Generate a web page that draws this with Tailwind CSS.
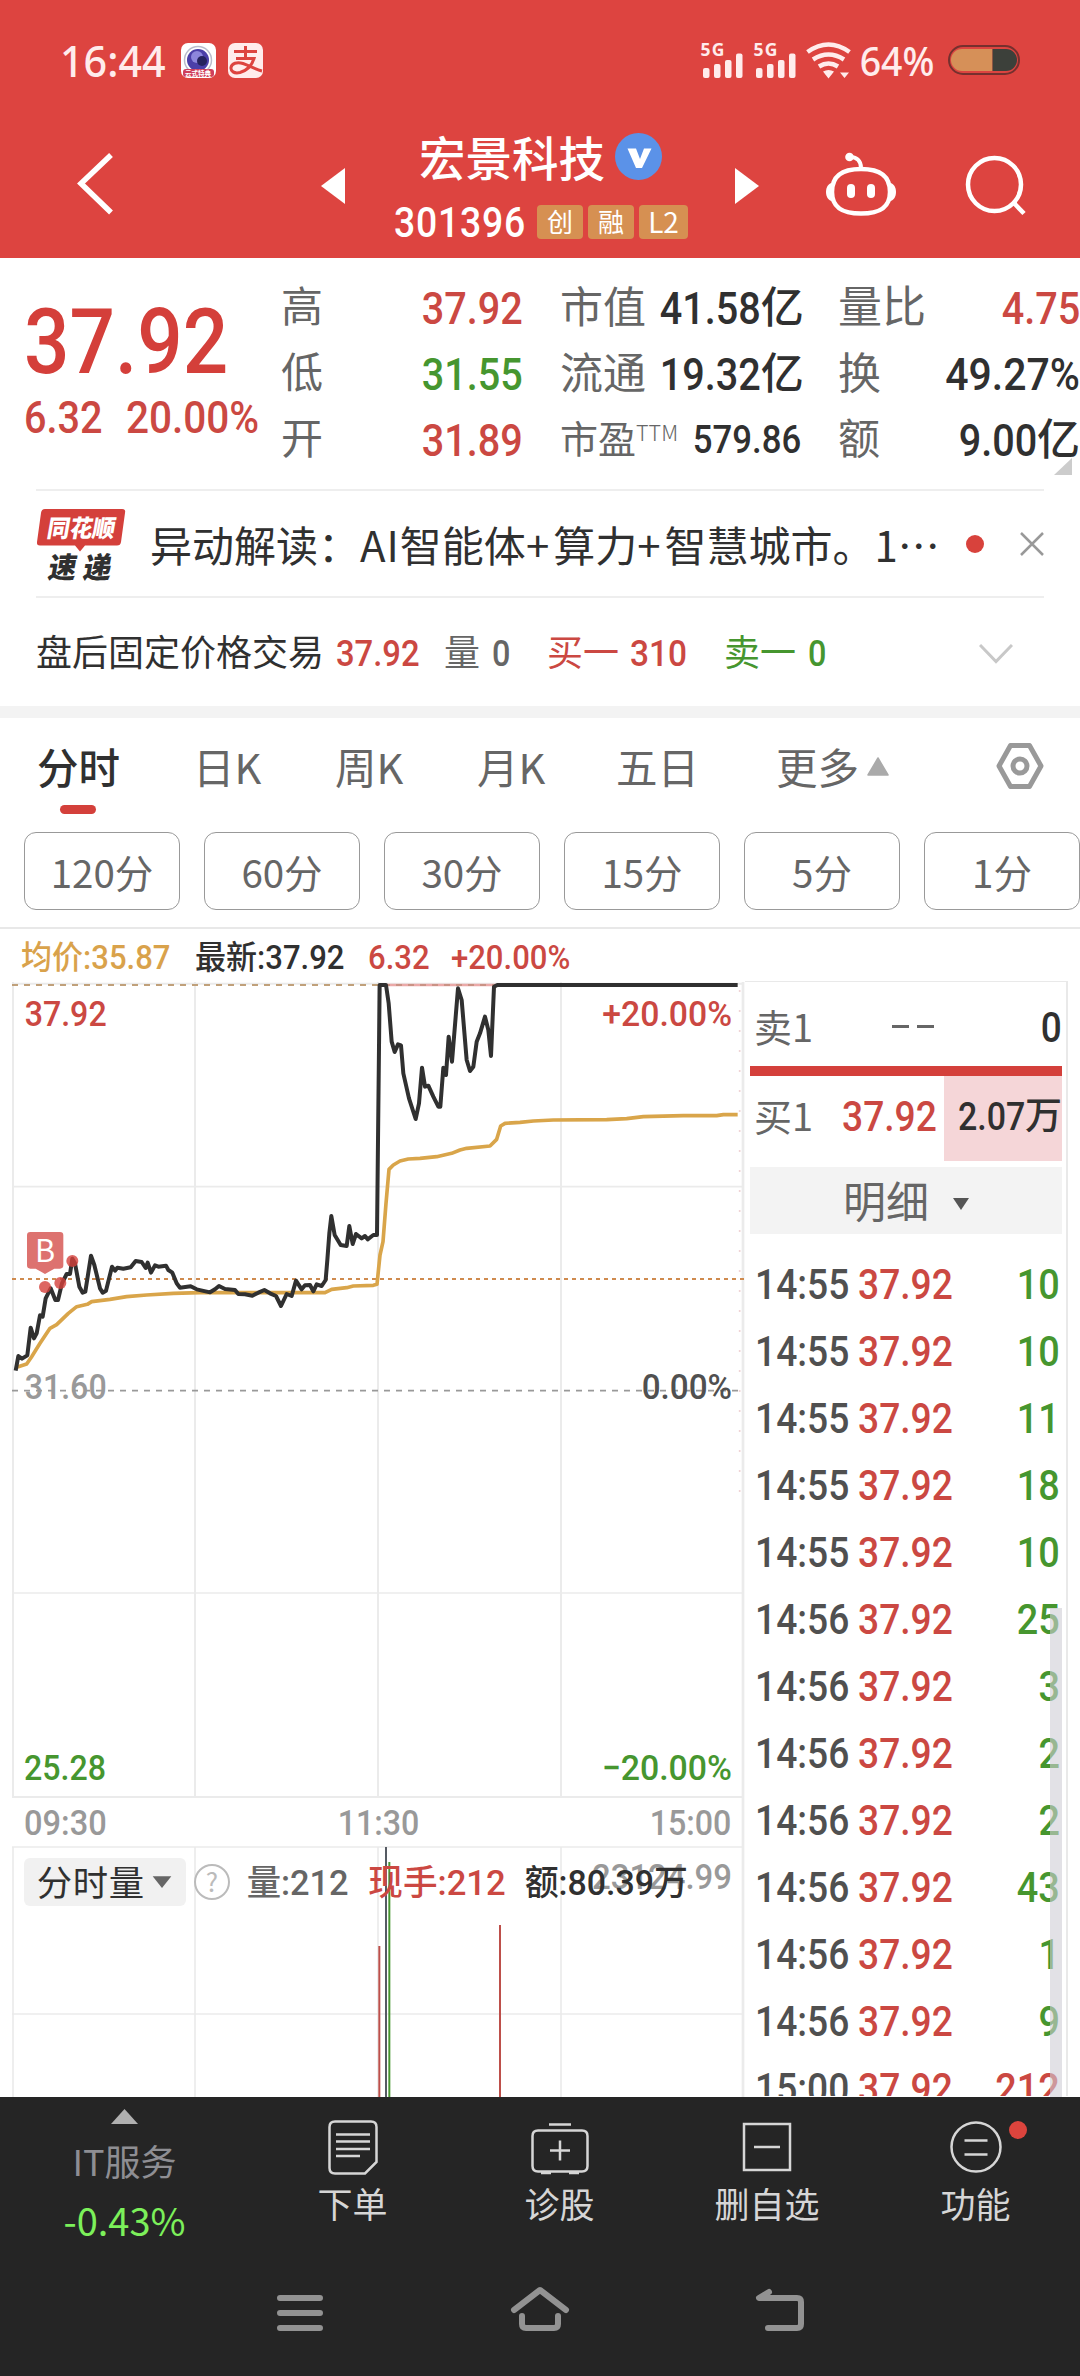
<!DOCTYPE html>
<html lang="zh-CN">
<head>
<meta charset="utf-8">
<title>宏景科技 301396</title>
<script src="https://cdn.jsdelivr.net/npm/@tailwindcss/browser@4"></script>
</head>
<body class="w-[1080px] h-[2376px] overflow-hidden bg-white font-['Noto_Sans_CJK_SC',sans-serif] text-[#303030] leading-none whitespace-nowrap flex flex-col">

<!-- Header -->
<header class="h-[258px] shrink-0 bg-[#dd4440] text-white flex flex-col">
  <!-- Status bar -->
  <div class="h-[120px] pl-[60px] pr-[60px] flex items-center justify-between text-[#ffecec]">
    <div class="flex items-center">
      <span class="w-[121px] font-['Noto_Sans'] font-medium text-[43px] origin-left scale-x-[.96]">16:44</span>
      <svg class="w-[35px] h-[35px]" viewBox="0 0 35 35"><rect width="35" height="35" rx="7" fill="#fff"/><circle cx="17" cy="17" r="13.500" fill="none" stroke="#b9bccb" stroke-width="1.500"/><circle cx="17" cy="17" r="11" fill="#4b3fa8"/><circle cx="16" cy="14" r="6" fill="#8d86dc"/><circle cx="21" cy="18" r="5" fill="#26235e"/><rect x="2" y="26" width="31" height="8" rx="3" fill="#cf3f5c"/><text x="17" y="32.500" font-size="6.500" font-weight="700" fill="#fff" text-anchor="middle">云式特典</text></svg>
      <svg class="w-[35px] h-[35px] ml-3" viewBox="0 0 35 35"><rect width="35" height="35" rx="7" fill="#ffecec"/><g fill="none" stroke="#dd4440" stroke-width="3"><path d="M6 8.500H29M17.500 3V15.500M8 15.500H26C24 22 19 27.500 12 29.500C6 31 2.500 28 3 24.500C3.500 20.500 9 18.500 15 20.500C22 23 28 26.500 34 28"/></g></svg>
    </div>
    <div class="flex items-center">
      <svg class="w-[152px] h-[37px] overflow-visible" viewBox="700 42 152 37" fill="#ffecec">
        <text x="700.500" y="56" font-size="17.500" font-weight="700" font-family="Noto Sans" textLength="24">5G</text>
        <text x="753.500" y="56" font-size="17.500" font-weight="700" font-family="Noto Sans" textLength="24">5G</text>
        <rect x="703" y="68" width="6.500" height="10" rx="2"/><rect x="714" y="64" width="6.500" height="14" rx="2"/><rect x="725" y="60" width="6.500" height="18" rx="2"/><rect x="736" y="53.500" width="6.500" height="24.500" rx="2"/>
        <rect x="756" y="68" width="6.500" height="10" rx="2"/><rect x="767" y="64" width="6.500" height="14" rx="2"/><rect x="778" y="60" width="6.500" height="18" rx="2"/><rect x="789" y="53.500" width="6.500" height="24.500" rx="2"/>
        <g fill="none" stroke="#ffecec" stroke-width="4.500"><path d="M807.500 52Q828.500 37 849.500 52"/><path d="M813 59.500Q828.500 49.500 844 59.500"/><path d="M819 66.500Q828.500 60.500 838 66.500"/></g>
        <path d="M823 71.500Q828.500 68.500 834 71.500L828.500 78.500ZM840 72.500H849L844.500 78Z"/>
      </svg>
      <span class="w-[96px] pl-2 font-['Noto_Sans'] font-medium text-[39px] origin-left scale-x-[.96]">64%</span>
      <svg class="w-[72px] h-[30px]" viewBox="0 0 72 30"><rect x="1" y="1" width="70" height="28" rx="14" fill="none" stroke="#75302e" stroke-width="2"/><path d="M14 4H44.500V26H14A11 11 0 0 1 14 4Z" fill="#d69058"/><path d="M44.500 4H58A11 11 0 0 1 58 26H44.500Z" fill="#3c403a"/></svg>
    </div>
  </div>
  <!-- Title bar -->
  <div class="flex h-[138px]">
    <svg class="w-[394px] h-[138px]" viewBox="0 120 394 138"><path d="M111 155L81 183.500L111 212.500" fill="none" stroke="#fff" stroke-width="5.500"/><path d="M345 168V204L321 186Z" fill="#fff"/></svg>
    <div class="w-[296px] flex flex-col">
      <div class="h-[76px] pl-[25px] pt-[13px] flex items-start">
        <span class="w-[196px] font-medium text-[46.5px] leading-[46px]">宏景科技</span>
        <svg class="w-[47px] h-[47px]" viewBox="0 0 47 47"><circle cx="23.500" cy="23.500" r="23.500" fill="#5b92e8"/><path d="M12.500 15.500H21L25 26L29 15.500H36.500L27 35H21Z" fill="#fff"/></svg>
      </div>
      <div class="h-[52px] flex items-center text-[26px] leading-[32px]">
        <span class="w-[143px] pt-0.5 font-[Roboto] font-medium text-[42px] tracking-[0.02em] origin-left scale-x-[.89]">301396</span>
        <span class="w-[46px] h-[34px] mr-[5px] rounded-[4px] bg-[#d69052] text-center">创</span>
        <span class="w-[46px] h-[34px] mr-[5px] rounded-[4px] bg-[#d69052] text-center">融</span>
        <span class="w-[49px] h-[34px] rounded-[4px] bg-[#d69052] text-center text-[28px]">L2</span>
      </div>
    </div>
    <svg class="w-[390px] h-[138px]" viewBox="690 120 390 138"><path d="M735 168V204L759 186Z" fill="#fff"/><g fill="none" stroke="#fff" stroke-width="4.500"><path d="M861 169C879 169 890 175 890 192C890 208 879 213.500 861 213.500C843 213.500 832 208 832 192C832 175 843 169 861 169Z"/><path d="M861 168C861 160 856 157 850 157" stroke-width="4"/><circle cx="994.500" cy="184.500" r="26.500"/><path d="M1013 202L1024 213.500"/></g><g fill="#fff"><circle cx="849.500" cy="157" r="4.300"/><rect x="847" y="184" width="8" height="14" rx="4"/><rect x="867" y="184" width="8" height="14" rx="4"/><path d="M832 183C824 184 824 200 832 201ZM890 183C898 184 898 200 890 201Z"/></g></svg>
  </div>
</header>

<!-- Quote summary -->
<section class="relative h-[231px] shrink-0 flex font-[Roboto,'Noto_Sans_CJK_SC'] font-medium text-[45px]">
  <div class="w-[281px] pt-[39px] text-[#d43f3a]">
    <div class="pl-[24px] h-[91px] leading-[92px] text-[90px]"><span class="inline-block origin-left scale-x-[.89]">37.92</span></div>
    <div class="flex h-[60px] leading-[60px] pl-[24px] text-[#cb4842]"><span class="w-[102px] origin-left scale-x-[.88]">6.32</span><span class="origin-left scale-x-[.9]">20.00%</span></div>
  </div>
  <div class="w-[242px] pt-[17px] text-[#cb4842]">
    <div class="h-[66px] flex items-center justify-between"><span class="font-normal text-[42px] text-[#666]">高</span><span class="origin-right scale-x-[.88]">37.92</span></div>
    <div class="h-[66px] flex items-center justify-between"><span class="font-normal text-[42px] text-[#666]">低</span><span class="origin-right scale-x-[.88] text-[#46962f]">31.55</span></div>
    <div class="h-[66px] flex items-center justify-between"><span class="font-normal text-[42px] text-[#666]">开</span><span class="origin-right scale-x-[.88]">31.89</span></div>
  </div>
  <div class="w-[278px] pl-[37px] pt-[17px]">
    <div class="h-[66px] flex items-center justify-between"><span class="font-normal text-[43px] text-[#666]">市值</span><span class="flex items-center"><span class="origin-right scale-x-[.88]">41.58</span><span class="text-[43px]">亿</span></span></div>
    <div class="h-[66px] flex items-center justify-between"><span class="font-normal text-[43px] text-[#666]">流通</span><span class="flex items-center"><span class="origin-right scale-x-[.88]">19.32</span><span class="text-[43px]">亿</span></span></div>
    <div class="h-[66px] flex items-center justify-between"><span class="font-normal text-[38px] text-[#666] flex">市盈<span class="text-[21.5px] font-['Noto_Sans_CJK_SC'] font-light">TTM</span></span><span class="text-[39.5px] origin-right scale-x-[.88]">579.86</span></div>
  </div>
  <div class="w-[279px] pl-[37px] pt-[17px]">
    <div class="h-[66px] flex items-center justify-between"><span class="font-normal text-[44px] text-[#666]">量比</span><span class="origin-right scale-x-[.88] text-[#cb4842]">4.75</span></div>
    <div class="h-[66px] flex items-center justify-between"><span class="font-normal text-[43px] text-[#666]">换</span><span class="origin-right scale-x-[.91]">49.27%</span></div>
    <div class="h-[66px] flex items-center justify-between"><span class="font-normal text-[42px] text-[#666]">额</span><span class="flex items-center"><span class="origin-right scale-x-[.88]">9.00</span><span class="text-[43px]">亿</span></span></div>
  </div>
  <svg class="absolute left-[1054px] top-[200px] w-[18px] h-[17px]" viewBox="0 0 18 17"><path d="M18 0V17H0Z" fill="#ccc"/></svg>
</section>

<!-- News strip -->
<section class="h-[109px] shrink-0 mx-9 border-t-2 border-b-2 border-[#eee] flex items-center">
  <svg class="w-[114px] h-[74px] overflow-visible shrink-0" viewBox="36 505 114 74"><path d="M45 507H122Q126 507 125 511L121 540Q120.500 543.500 117 543.500H85L80 549.500L75 543.500H40Q36.500 543.500 37 540L41 511Q41.500 507 45 507Z" fill="#d4403b"/><g font-family="Noto Sans CJK SC" font-weight="900"><text transform="translate(46 534.500) skewX(-10)" font-size="24" fill="#fff" textLength="68" lengthAdjust="spacingAndGlyphs">同花顺</text><text transform="translate(47 575.500) skewX(-10)" font-size="29" fill="#303030" textLength="28" lengthAdjust="spacingAndGlyphs">速</text><text transform="translate(82 575.500) skewX(-10)" font-size="29" fill="#303030" textLength="28" lengthAdjust="spacingAndGlyphs">递</text></g></svg>
  <span class="w-[816px] text-[42px]">异动解读：<span class="tracking-[1px]">AI</span>智能体<span class="tracking-[4px]">+</span>算力<span class="tracking-[4px]">+</span>智慧城市。1⋯</span>
  <i class="size-[18px] rounded-full bg-[#d8423c]"></i>
  <svg class="w-6 h-6 ml-9 shrink-0" viewBox="0 0 24 24"><path d="M1 1L23 23M23 1L1 23" stroke="#999" stroke-width="2.500"/></svg>
</section>

<!-- After-hours fixed price -->
<section class="h-[108px] shrink-0 pl-9 pt-1 flex items-center text-[36px] font-[Roboto,'Noto_Sans_CJK_SC']">
  <span class="w-[300px]">盘后固定价格交易</span>
  <span class="w-[108px] font-medium text-[#cb4842] origin-left scale-x-[.91]">37.92</span>
  <span class="w-[48px] text-[#666]">量</span><span class="w-[55px] font-medium text-[#666] origin-left scale-x-[.9]">0</span>
  <span class="w-[83px] text-[#cb4842]">买一</span><span class="w-[94px] font-medium text-[#cb4842] origin-left scale-x-[.93]">310</span>
  <span class="w-[84px] text-[#46962f]">卖一</span><span class="w-[171px] font-medium text-[#46962f] origin-left scale-x-[.9]">0</span>
  <svg class="w-[34px] h-[20px]" viewBox="0 0 34 20"><path d="M1 1L17 17.500L33 1" fill="none" stroke="#c8c8c8" stroke-width="3"/></svg>
</section>
<div class="h-3 shrink-0 bg-[#f3f3f3]"></div>

<!-- Period tabs -->
<nav class="h-[100px] shrink-0 flex text-[41.5px] text-[#666] pl-[37px] leading-[96px]">
  <div class="w-[156px] font-medium text-[#303030] relative">分时<i class="absolute left-[23px] top-[87px] w-9 h-[9px] rounded-full bg-[#d4403b]"></i></div>
  <div class="w-[142px]">日K</div>
  <div class="w-[142px]">周K</div>
  <div class="w-[139px]">月K</div>
  <div class="w-[160px]">五日</div>
  <div class="w-[220px] h-[96px] flex items-center">更多<svg class="w-[22px] h-[19px] ml-2" viewBox="0 0 22 19"><path d="M11 1L21 18H1Z" fill="#aaa" stroke="#aaa" stroke-width="1.500" stroke-linejoin="round"/></svg></div>
  <svg class="w-12 h-12 mt-6" viewBox="0 0 48 48" fill="none" stroke="#999" stroke-width="5" stroke-linejoin="round"><path d="M14.500 3.500H33.500L45 24L33.500 44.500H14.500L3 24Z"/><circle cx="24" cy="24" r="7"/></svg>
</nav>

<!-- Minute intervals -->
<div class="h-[111px] shrink-0 border-b-2 border-[#e8e8e8] pt-[14px] pl-6 flex gap-6 text-[38.5px] text-[#666] leading-[76px] text-center *:w-[156px] *:h-[78px] *:shrink-0 *:border *:border-[#999] *:rounded-[12px]">
  <span>120分</span><span>60分</span><span>30分</span><span>15分</span><span>5分</span><span>1分</span>
</div>

<!-- Trading area -->
<main class="flex h-[1168px] shrink-0 overflow-hidden">
  <div class="w-[745px] shrink-0 flex flex-col">
    <div class="h-[53px] pl-[21px] pt-1.5 flex items-center text-[32.5px] font-[Roboto,'Noto_Sans_CJK_SC'] font-medium *:origin-left *:scale-x-[.955]">
      <span class="w-[174px] text-[#d9a24b]">均价:35.87</span><span class="w-[173px]">最新:37.92</span><span class="w-[83px] text-[#cb4842]">6.32</span><span class="text-[#cb4842]">+20.00%</span>
    </div>
    <!-- Intraday price and volume chart; three units per pixel -->
    <svg class="w-[745px] h-[1115px]" viewBox="0 36 2235 3345" fill="none">
      <g stroke="#ebebeb" stroke-width="6">
        <path d="M36 41H2229M39 36V2482M585 36V2482M1134 36V2482M1683 36V2482M36 2481H2229"/>
        <path d="M36 2631H2229M39 2631V3381M585 2631V3381M1134 2631V3381M1683 2631V3381M36 3132H2229M39 650H2229M39 1869H2229" stroke-width="5"/>
        <path d="M2229 36V3381" stroke-width="8"/>
      </g>
      <path d="M2219 60V1600" stroke="#f0d4d6" stroke-width="5" stroke-dasharray="6 54"/>
      <path d="M36 45H1134" stroke="#c0a07a" stroke-width="6" stroke-dasharray="18 18"/>
      <path d="M1140 45H1490" stroke="#eba9a8" stroke-width="8"/>
      <path d="M1152 45H1490" stroke="#c08a78" stroke-width="5" stroke-dasharray="18 18"/>
      <path d="M36 927H2232" stroke="#cf8a4e" stroke-width="6" stroke-dasharray="12 12"/>
      <path d="M36 1262H2214" stroke="#999" stroke-width="5" stroke-dasharray="18 18"/>
      <polyline stroke="#d9a54a" stroke-width="11" stroke-linejoin="round" points="50,1192 80,1182 95,1160 120,1120 150,1075 170,1064 205,1030 230,1010 262,1003 275,995 330,988 380,980 440,975 520,970 600,968 975,968 995,958 1040,953 1060,948 1120,946 1131,943 1140,855 1149,815 1158,700 1167,598 1180,585 1200,573 1225,567 1260,565 1310,560 1355,550 1380,540 1400,535 1470,528 1490,508 1502,468 1515,460 1560,457 1600,453 1660,450 1820,449 1880,446 1930,440 2050,437 2150,437 2170,434 2213,434"/>
      <polyline stroke="#303030" stroke-width="12" stroke-linejoin="round" points="47,1202 55,1158 66,1166 82,1156 92,1073 102,1105 110,1090 120,1036 128,1040 137,985 152,955 166,990 174,990 186,940 200,912 210,912 217,866 225,880 238,950 248,968 256,965 273,857 283,885 300,955 308,968 318,962 336,890 345,902 352,893 370,896 392,892 407,873 425,876 437,894 443,878 453,908 465,886 475,890 498,887 505,900 517,908 530,940 540,953 572,949 590,958 630,967 645,958 657,948 675,957 705,960 715,972 735,973 757,977 775,968 793,960 810,970 828,978 843,1008 860,972 875,978 888,932 905,958 915,946 930,945 940,964 950,943 965,948 977,930 982,870 988,790 994,738 1004,795 1022,825 1040,828 1048,768 1058,822 1068,792 1085,805 1095,798 1103,808 1120,795 1131,795 1139,45 1158,45 1166,100 1175,215 1184,246 1194,223 1203,226 1210,310 1227,385 1247,447 1257,400 1266,293 1275,350 1285,347 1300,380 1315,410 1321,410 1330,293 1338,315 1346,200 1356,275 1374,55 1385,90 1400,270 1410,303 1420,290 1430,215 1440,190 1455,140 1465,180 1473,258 1482,50 1492,45 2213,45"/>
      <g fill="#d4403b" fill-opacity=".8"><circle cx="135" cy="951" r="18"/><circle cx="181" cy="939" r="18"/><circle cx="217" cy="873" r="18"/></g>
      <path d="M91 786H180Q190 786 190 796V886Q190 896 180 896H163L135 912L107 896H91Q81 896 81 886V796Q81 786 91 786Z" fill="#dd726f"/>
      <text x="135" y="876" font-size="92" fill="#fff" text-anchor="middle">B</text>
      <!-- volume bars -->
      <path d="M1158 2631V3381" stroke="#555b63" stroke-width="6"/><path d="M1168 2676V3381" stroke="#46962f" stroke-width="6"/>
      <path d="M1138 2928V3381M1500 2865V3381" stroke="#bd4f4a" stroke-width="6"/>
      <!-- axis labels -->
      <g font-family="Roboto" font-weight="500" font-size="107">
        <text x="74" y="168" fill="#cb4842" textLength="246" lengthAdjust="spacingAndGlyphs">37.92</text>
        <text x="1807" y="168" fill="#cb4842" textLength="389" lengthAdjust="spacingAndGlyphs">+20.00%</text>
        <text x="74" y="1287" fill="#999" textLength="246" lengthAdjust="spacingAndGlyphs">31.60</text>
        <text x="1925" y="1287" fill="#505050" textLength="271" lengthAdjust="spacingAndGlyphs">0.00%</text>
        <text x="72" y="2431" fill="#46962f" textLength="246" lengthAdjust="spacingAndGlyphs">25.28</text>
        <text x="1805" y="2431" fill="#46962f" textLength="391" lengthAdjust="spacingAndGlyphs">−20.00%</text>
        <g fill="#999"><text x="72" y="2594" textLength="248" lengthAdjust="spacingAndGlyphs">09:30</text><text x="1013" y="2594" textLength="245" lengthAdjust="spacingAndGlyphs">11:30</text><text x="1949" y="2594" textLength="245" lengthAdjust="spacingAndGlyphs">15:00</text>
        <text x="1776" y="2756" textLength="420" lengthAdjust="spacingAndGlyphs">23124.99</text></g>
      </g>
      <!-- indicator selector and readings -->
      <rect x="72" y="2664" width="486" height="144" rx="18" fill="#f1f1f1"/>
      <path d="M458 2719H514L486 2754Z" fill="#666"/>
      <circle cx="636" cy="2736" r="51" stroke="#bbb" stroke-width="6"/><text x="636" y="2765" font-size="78" fill="#bbb" text-anchor="middle">?</text>
      <g font-family="Roboto, Noto Sans CJK SC" font-size="106" font-weight="500">
        <text x="110" y="2778" font-weight="400" fill="#303030" textLength="322">分时量</text>
        <text x="740" y="2775" fill="#666" textLength="306" lengthAdjust="spacingAndGlyphs">量:212</text>
        <text x="1105" y="2775" fill="#cb4842" textLength="412" lengthAdjust="spacingAndGlyphs">现手:212</text>
        <text x="1574" y="2775" fill="#303030" textLength="490" lengthAdjust="spacingAndGlyphs">额:80.39万</text>
      </g>
    </svg>
  </div>

  <!-- Order book and trade ticks -->
  <aside class="relative w-[323px] h-[1115px] mt-[52px] border-t border-r-2 border-[#e9e9e9] pl-[5px] pr-[4px] flex flex-col font-[Roboto,'Noto_Sans_CJK_SC'] font-medium text-[42px]">
    <div class="h-[84px] pl-1 pt-1 flex items-center"><span class="w-[138px] font-['Noto_Sans_CJK_SC'] font-normal text-[38px] text-[#666]">卖1</span><i class="w-[17px] h-[3px] bg-[#666]"></i><i class="w-[17px] h-[3px] ml-2 bg-[#666]"></i><span class="ml-auto pt-1 origin-right scale-x-[.88]">0</span></div>
    <div class="h-[10px] bg-[#d4403b]"></div>
    <div class="h-[85px] pl-1 flex"><span class="w-[88px] font-['Noto_Sans_CJK_SC'] font-normal text-[38px] leading-[78px] text-[#666]">买1</span><span class="w-[102px] text-[#cb4842] leading-[82px] origin-left scale-x-[.885]">37.92</span><span class="flex-1 bg-[#f5d6d8] flex justify-end leading-[82px] text-[39px]"><span class="origin-right scale-x-[.87]">2.07</span><span class="text-[37px]">万</span></span></div>
    <div class="h-[67px] mt-[6px] pt-1.5 bg-[#f3f3f3] flex items-center justify-center font-normal text-[43px] text-[#666]">明细<svg class="w-4 h-3 ml-6" viewBox="0 0 16 12"><path d="M0 0H16L8 12Z" fill="#555"/></svg></div>
    <div id="ticks" class="h-[862px] pt-[17px] overflow-hidden"></div>
    <div class="absolute right-[4px] top-[626px] w-3 h-[489px] bg-[#cfcdd5]/60"></div>
  </aside>
</main>

<!-- Bottom toolbar -->
<footer class="h-[279px] shrink-0 bg-[#252525] text-[#d6d6d6] flex flex-col">
  <div class="h-[163px] flex text-[35px]">
    <div class="w-[249px] flex flex-col items-center pt-3 text-[#8e8e93]">
      <svg class="w-[27px] h-[15px]" viewBox="0 0 27 15"><path d="M13.500 0L27 15H0Z" fill="#b0b0b0"/></svg>
      <span class="text-[36px] mt-[18px]">IT服务</span>
      <span class="text-[38px] mt-[23px] text-[#7cf05a]">-0.43%</span>
    </div>
    <div class="w-[207px] flex flex-col items-center pt-[23px]">
      <svg class="w-[50px] h-[55px]" viewBox="0 0 50 55" fill="none" stroke="#d6d6d6" stroke-width="2.500"><path d="M7 1.500H43Q48.500 1.500 48.500 7V42L37 53.500H7Q1.500 53.500 1.500 48V7Q1.500 1.500 7 1.500Z"/><path d="M8 14.500H42M8 21.500H42M8 29H42M8 36H32"/></svg>
      <span class="mt-[10px]">下单</span>
    </div>
    <div class="w-[207px] flex flex-col items-center pt-[23px]">
      <svg class="w-[58px] h-[55px]" viewBox="0 0 58 55" fill="none" stroke="#d6d6d6" stroke-width="2.500"><path d="M18 4.500H40M7 10.500H51Q56.500 10.500 56.500 16V46Q56.500 51.500 51 51.500H7Q1.500 51.500 1.500 46V16Q1.500 10.500 7 10.500ZM19 30.500H39M29 20.500V40.500M10 53H20M38 53H48"/></svg>
      <span class="mt-[10px]">诊股</span>
    </div>
    <div class="w-[208px] flex flex-col items-center pt-[23px]">
      <svg class="w-[50px] h-[55px]" viewBox="0 0 50 55" fill="none" stroke="#d6d6d6" stroke-width="2.500"><path d="M2 4H48V50H2ZM12 27H38"/></svg>
      <span class="mt-[10px]">删自选</span>
    </div>
    <div class="w-[209px] relative flex flex-col items-center pt-[23px]">
      <svg class="w-[52px] h-[55px]" viewBox="0 0 52 55" fill="none" stroke="#d6d6d6" stroke-width="2.500"><circle cx="26" cy="27" r="24.500"/><path d="M14.500 20.500H37.500M14.500 34.500H37.500"/></svg>
      <span class="mt-[10px]">功能</span>
      <i class="absolute left-[138px] top-[24px] size-[18px] rounded-full bg-[#dc443d]"></i>
    </div>
  </div>
  <svg class="w-full h-[116px]" viewBox="0 2260 1080 116" fill="none" stroke="#929292" stroke-width="6" stroke-linecap="round" stroke-linejoin="round"><path d="M280 2298H320M280 2313H320M280 2328H320"/><path d="M514 2310L540 2290L566 2310M522 2316V2324Q522 2328 526 2328H554Q558 2328 558 2324V2316"/><path d="M769 2292L759 2298H797Q801 2298 801 2302V2324Q801 2328 797 2328H768"/></svg>
</footer>

<script>
const ticks = [
  ['14:55', 10], ['14:55', 10], ['14:55', 11], ['14:55', 18], ['14:55', 10],
  ['14:56', 25], ['14:56', 3], ['14:56', 2], ['14:56', 2], ['14:56', 43],
  ['14:56', 1], ['14:56', 9], ['15:00', 212]
];
document.getElementById('ticks').innerHTML = ticks.map(([time, qty], i) => `
  <div class="h-[67px] pl-[5px] pr-[2px] flex items-center">
    <span class="w-[103px] shrink-0 text-[#505050] origin-left scale-x-[.885]">${time}</span>
    <span class="text-[#cb4842] origin-left scale-x-[.885]">37.92</span>
    <span class="ml-auto origin-right scale-x-[.9] ${i === 12 ? 'text-[#cb4842]' : 'text-[#46962f]'}">${qty}</span>
  </div>`).join('');
</script>
</body>
</html>
